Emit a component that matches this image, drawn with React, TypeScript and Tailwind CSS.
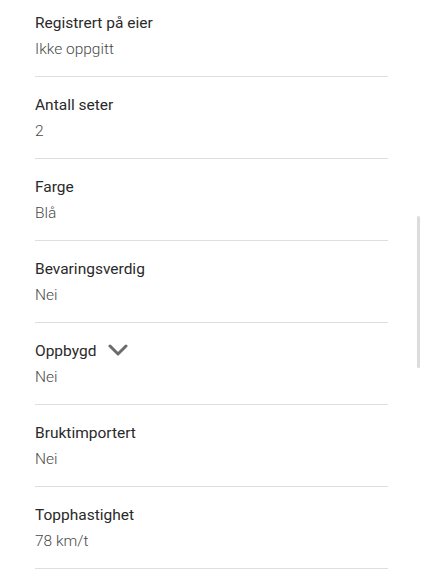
import React from 'react';

type Row = { label: string; value: string; expandable?: boolean };

const rows: Row[] = [
  { label: 'Registrert på eier', value: 'Ikke oppgitt' },
  { label: 'Antall seter', value: '2' },
  { label: 'Farge', value: 'Blå' },
  { label: 'Bevaringsverdig', value: 'Nei' },
  { label: 'Oppbygd', value: 'Nei', expandable: true },
  { label: 'Bruktimportert', value: 'Nei' },
  { label: 'Topphastighet', value: '78 km/t' },
];

const Chevron: React.FC = () => (
  <svg width="20" height="14" viewBox="0 0 20 14" className="ml-[12px] -mt-[2px]">
    <path d="M2 3 L10 11 L18 3" fill="none" stroke="#6b6b6b" strokeWidth="3" strokeLinecap="round" strokeLinejoin="round" />
  </svg>
);

const App: React.FC = () => {
  return (
    <div className="relative h-[575px] w-[424px] overflow-hidden bg-white font-['Roboto',sans-serif]">
      <div className="-mt-[5px] px-[35px] pr-[36px]">
        {rows.map((row) => (
          <div key={row.label} className="border-b border-[#dedede] pt-[18px] pb-[17px]">
            <div className="flex items-center h-[20px] text-[15.5px] leading-[20px] text-[#2a2a2a]">
              {row.label}
              {row.expandable && <Chevron />}
            </div>
            <div className="mt-[6px] h-[20px] text-[15.5px] leading-[20px] font-light text-[#4a4a4a]">
              {row.value}
            </div>
          </div>
        ))}
      </div>
      {/* scroll indicator */}
      <div className="absolute left-[417px] top-[216px] h-[152px] w-[3px] rounded-full bg-[#dcdcdc]" />
    </div>
  );
};

export default App;
